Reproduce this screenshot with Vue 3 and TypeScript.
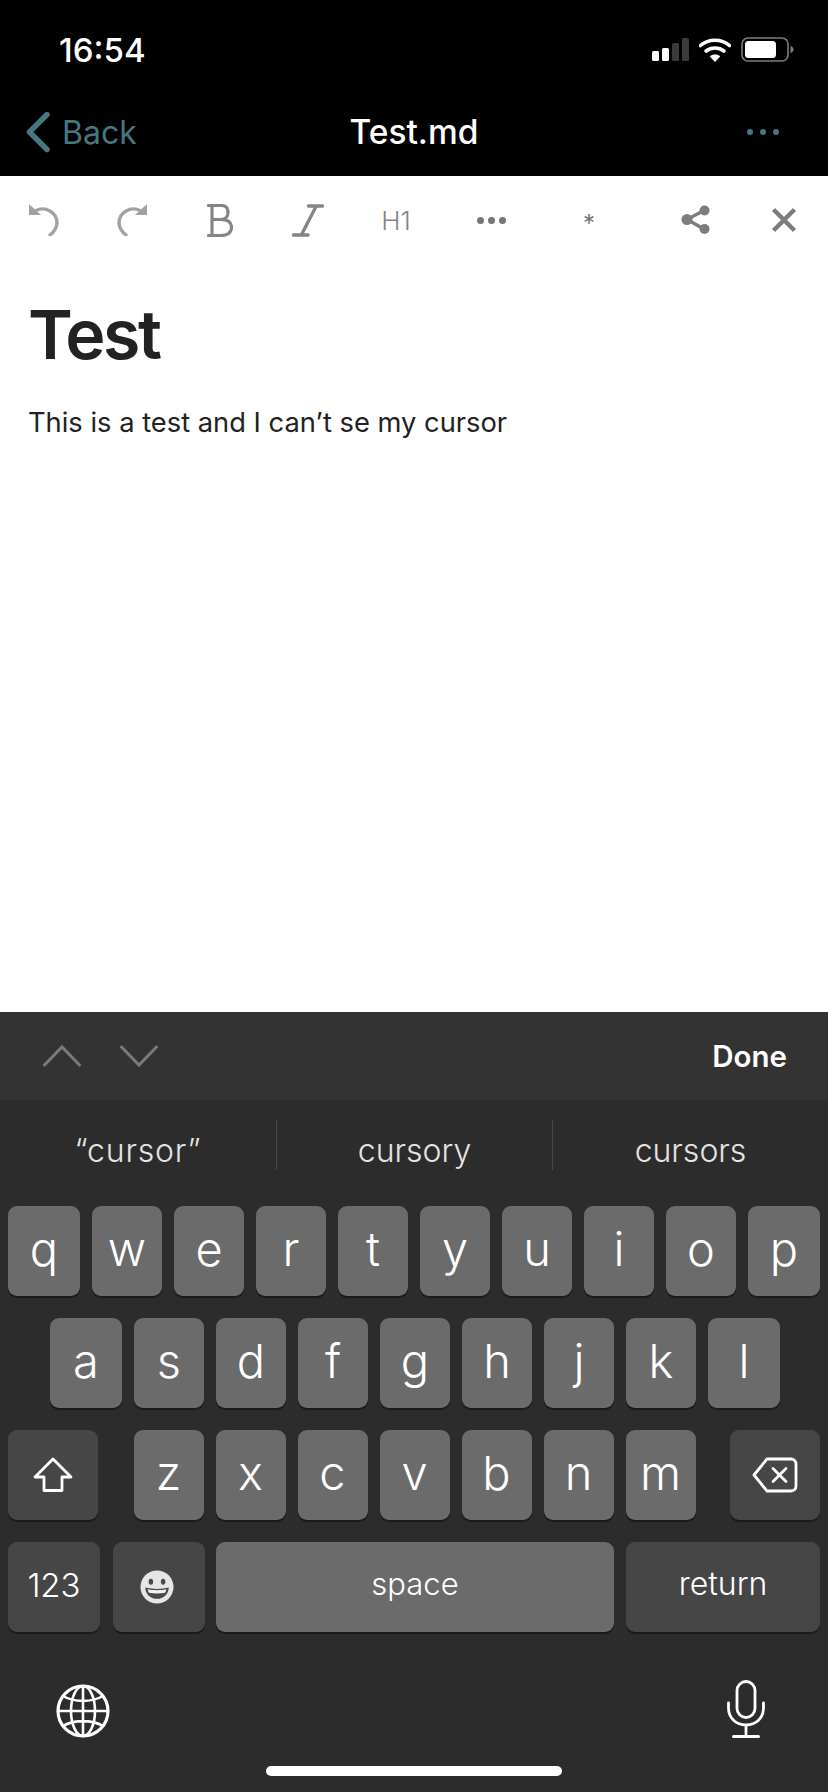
<script setup lang="ts">
type Key = { label: string; wide?: boolean };

const toKeys = (s: string, wideEnds = false): Key[] =>
    s.split('').map((label, i, all) => ({ label, wide: wideEnds && (i === 0 || i === all.length - 1) }));

const row1 = toKeys('qwertyuiop', true);
const row2 = toKeys('asdfghjkl', true);
const row3 = toKeys('zxcvbnm');
</script>

<template>
    <div class="phone">
        <header class="top">
            <div class="status">
                <span class="time">16:54</span>
                <div class="status-icons">
                    <svg class="signal" width="37" height="23" viewBox="0 0 37 23">
                        <rect x="0" y="13" width="7" height="10" rx="1.5" fill="#fff" />
                        <rect x="10" y="10" width="7" height="13" rx="1.5" fill="#fff" />
                        <rect x="20" y="5" width="7" height="18" rx="1.5" fill="#3a3a3a" />
                        <rect x="30" y="0" width="7" height="23" rx="1.5" fill="#3a3a3a" />
                    </svg>
                    <svg class="wifi" width="32" height="24" viewBox="0 0 32 24">
                        <path d="M1.5 7.5C9.5 0.5 22.5 0.5 30.5 7.5" fill="none" stroke="#fff" stroke-width="3.6" stroke-linecap="round" />
                        <path d="M7 13C12 9 20 9 25 13" fill="none" stroke="#fff" stroke-width="3.6" stroke-linecap="round" />
                        <path d="M16 24L10.8 18.4C13.6 16 18.4 16 21.2 18.4Z" fill="#fff" />
                    </svg>
                    <svg class="battery" width="53" height="25" viewBox="0 0 53 25">
                        <rect x="1" y="1" width="46" height="23" rx="6" fill="none" stroke="#7c7c7c" stroke-width="1.6" />
                        <rect x="4" y="4" width="31" height="17" rx="3.5" fill="#fff" />
                        <path d="M49.5 9C51.5 9.6 52.6 11 52.6 12.5C52.6 14 51.5 15.4 49.5 16Z" fill="#7c7c7c" />
                    </svg>
                </div>
            </div>
            <nav class="nav">
                <div class="back">
                    <svg width="26" height="42" viewBox="0 0 26 42">
                        <path d="M22 3.5L4.5 21L22 38.5" fill="none" stroke="#477783" stroke-width="5.4" stroke-linecap="round" stroke-linejoin="round" />
                    </svg>
                    <span>Back</span>
                </div>
                <span class="title">Test.md</span>
                <div class="more">
                    <i></i><i></i><i></i>
                </div>
            </nav>
        </header>

        <div class="toolbar">
            <svg width="30" height="32" viewBox="0 0 30 32">
                <path d="M7 6.500C16 2 28 8 28 19C28 24 24 29 21 31" fill="none" stroke="#a2a2a2" stroke-width="3.400" stroke-linecap="round" />
                <path d="M0 0V11H12Z" fill="#a2a2a2" />
            </svg>
            <svg width="30" height="32" viewBox="0 0 30 32">
                <path d="M23 6.500C14 2 2 8 2 19C2 24 6 29 9 31" fill="none" stroke="#a2a2a2" stroke-width="3.400" stroke-linecap="round" />
                <path d="M30 0V11H18Z" fill="#a2a2a2" />
            </svg>
            <svg width="26" height="33" viewBox="0 0 26 33">
                <path d="M1.500 1.500H14C19 1.500 21 4.500 21 8.500C21 12.500 18.500 15.500 14 15.500H5M14 15.500C20.500 15.500 24.500 18 24.500 23.500C24.500 28.500 20.500 31.500 14 31.500H1.500M5 1.500V31.500" fill="none" stroke="#858585" stroke-width="3.200" stroke-linecap="round" stroke-linejoin="round" />
            </svg>
            <svg width="32" height="33" viewBox="0 0 32 33">
                <path d="M16.500 2H30.500M1.500 31H16M24.300 2L9.300 31" fill="none" stroke="#858585" stroke-width="3.400" stroke-linecap="round" />
            </svg>
            <span class="h1">H1</span>
            <div class="tool-dots"><i></i><i></i><i></i></div>
            <span class="star">*</span>
            <svg width="30" height="30" viewBox="0 0 30 30">
                <path d="M23 5.500L6 14.500L23 24" fill="none" stroke="#7d7d7d" stroke-width="3.400" />
                <circle cx="23.500" cy="5.500" r="5" fill="#7d7d7d" />
                <circle cx="6" cy="14.500" r="5.500" fill="#7d7d7d" />
                <circle cx="23.500" cy="24" r="5" fill="#7d7d7d" />
            </svg>
            <svg width="26" height="26" viewBox="0 0 26 26">
                <path d="M2.500 2.500L23.500 23.500M23.500 2.500L2.500 23.500" fill="none" stroke="#7d7d7d" stroke-width="4.400" />
            </svg>
        </div>

        <main class="doc">
            <h1>Test</h1>
            <p>This is a test and I can’t se my cursor</p>
        </main>

        <div class="accessory">
            <div class="arrows">
                <svg width="38" height="24" viewBox="0 0 38 24">
                    <path d="M1.500 21L19 3L36.500 21" fill="none" stroke="#7a7a7a" stroke-width="3" stroke-linecap="round" />
                </svg>
                <svg width="38" height="24" viewBox="0 0 38 24">
                    <path d="M1.500 3L19 21L36.500 3" fill="none" stroke="#7a7a7a" stroke-width="3" stroke-linecap="round" />
                </svg>
            </div>
            <span class="done">Done</span>
        </div>

        <section class="keyboard">
            <div class="suggest">
                <span class="quoted">“cursor”</span>
                <span>cursory</span>
                <span>cursors</span>
            </div>

            <div class="keys">
                <div class="row">
                    <div v-for="k in row1" :key="k.label" class="key letter" :class="{ wide: k.wide }">{{ k.label }}</div>
                </div>
                <div class="row row-2">
                    <div v-for="k in row2" :key="k.label" class="key letter" :class="{ wide: k.wide }">{{ k.label }}</div>
                </div>
                <div class="row">
                    <div class="key dark shift">
                        <svg width="40" height="36" viewBox="0 0 40 36">
                            <path d="M20 2L38 20H29V33.500H11V20H2Z" fill="none" stroke="#fff" stroke-width="2.800" stroke-linejoin="round" />
                        </svg>
                    </div>
                    <div class="letters">
                        <div v-for="k in row3" :key="k.label" class="key letter">{{ k.label }}</div>
                    </div>
                    <div class="key dark shift">
                        <svg width="46" height="36" viewBox="0 0 46 36">
                            <path d="M15 2H39C42 2 44 4 44 7V29C44 32 42 34 39 34H15L2 18Z" fill="none" stroke="#fff" stroke-width="2.800" stroke-linejoin="round" />
                            <path d="M21 11.500L34 24.500M34 11.500L21 24.500" fill="none" stroke="#fff" stroke-width="2.800" stroke-linecap="round" />
                        </svg>
                    </div>
                </div>
                <div class="row">
                    <div class="key dark num">123</div>
                    <div class="key dark emoji">
                        <svg width="34" height="34" viewBox="0 0 36 36">
                            <circle cx="18" cy="18" r="17.500" fill="#e6e6e6" />
                            <ellipse cx="11.500" cy="12.500" rx="2.400" ry="3.200" fill="#4a4a4a" />
                            <ellipse cx="24.500" cy="12.500" rx="2.400" ry="3.200" fill="#4a4a4a" />
                            <path d="M5.500 18.500C13 20.500 23 20.500 30.500 18.500C30 26 25 30.500 18 30.500C11 30.500 6 26 5.500 18.500Z" fill="#4a4a4a" />
                            <path d="M8 20.500C14 21.800 22 21.800 28 20.500C27.600 22 27.200 23 26.600 24C21 25 15 25 9.400 24C8.800 23 8.400 22 8 20.500Z" fill="#f2f2f2" />
                        </svg>
                    </div>
                    <div class="key letter space">space</div>
                    <div class="key dark ret">return</div>
                </div>
            </div>

            <div class="kb-bottom">
                <svg width="54" height="54" viewBox="0 0 54 54">
                    <g fill="none" stroke="#fff" stroke-width="2.600">
                        <circle cx="27" cy="27" r="25" stroke-width="3.200" />
                        <ellipse cx="27" cy="27" rx="12" ry="25" />
                        <path d="M27 2V52M2 27H52M7 12C18 18.500 36 18.500 47 12M7 42C18 35.500 36 35.500 47 42" />
                    </g>
                </svg>
                <svg width="38" height="58" viewBox="0 0 38 58">
                    <g fill="none" stroke="#fff" stroke-width="2.800" stroke-linecap="round">
                        <rect x="10" y="1.500" width="18" height="36" rx="9" />
                        <path d="M1.500 23V28C1.500 38 9 45 19 45C29 45 36.500 38 36.500 28V23M19 45V56" />
                        <path d="M6.500 56.500H31.500" stroke-width="3" />
                    </g>
                </svg>
            </div>
            <div class="home-bar"></div>
        </section>
    </div>
</template>

<style scoped>
.phone {
    width: 828px;
    height: 1792px;
    display: flex;
    flex-direction: column;
    background: #fff;
    font-family: Inter, "Liberation Sans", sans-serif;
    overflow: hidden;
}
.top {
    background: #000;
    height: 176px;
    color: #fff;
}
.status {
    height: 88px;
    display: flex;
    align-items: center;
    justify-content: space-between;
    padding: 21px 34px 10px 59px;
    box-sizing: border-box;
}
.time {
    font-size: 33px;
    font-weight: 500;
}
.status-icons {
    display: flex;
    align-items: center;
    gap: 10px;
}
.nav {
    height: 88px;
    display: flex;
    align-items: center;
    justify-content: space-between;
    padding: 0 49px 0 25px;
    position: relative;
}
.back {
    display: flex;
    align-items: center;
    gap: 11px;
    color: #477783;
    font-size: 32px;
}
.title {
    position: absolute;
    left: 0;
    right: 0;
    text-align: center;
    font-size: 33.500px;
    font-weight: 500;
}
.more {
    display: flex;
    gap: 7px;
}
.more i {
    width: 6px;
    height: 6px;
    border-radius: 50%;
    background: #477783;
}
.toolbar {
    height: 88px;
    display: grid;
    grid-template-columns: repeat(5, 88px) 102px 94px 120px 56px;
    align-items: center;
    justify-items: center;
}
.h1 {
    font-size: 26px;
    font-weight: 300;
    color: #858585;
}
.tool-dots {
    display: flex;
    gap: 4px;
}
.tool-dots i {
    width: 7px;
    height: 7px;
    border-radius: 50%;
    background: #757575;
}
.star {
    font-size: 24px;
    color: #757575;
    margin-top: 6px;
}
.doc {
    flex: 1;
    padding: 0 28px;
    color: #222;
}
.doc h1 {
    margin: 30px 0 0;
    font-size: 68px;
    font-weight: 600;
    letter-spacing: -2.400px;
    line-height: 80px;
}
.doc p {
    margin: 29px 0 0;
    font-size: 27.300px;
    line-height: 40px;
}
.accessory {
    height: 88px;
    background: #333;
    display: flex;
    align-items: center;
    justify-content: space-between;
    padding: 0 41px 0 43px;
}
.arrows {
    display: flex;
    gap: 39px;
}
.done {
    color: #fff;
    font-size: 29.500px;
    font-weight: 600;
}
.keyboard {
    height: 692px;
    background: #2c2c2c;
    position: relative;
}
.suggest {
    height: 106px;
    box-sizing: border-box;
    padding-top: 20px;
    display: grid;
    grid-template-columns: repeat(3, 1fr);
    align-items: start;
}
.suggest span {
    height: 50px;
    line-height: 62px;
    text-align: center;
    color: #e4e4e4;
    font-size: 32px;
    font-weight: 300;
    border-left: 1px solid #494949;
}
.suggest .quoted {
    border-left: none;
    letter-spacing: 0.800px;
}
.keys {
    display: flex;
    flex-direction: column;
    gap: 22px;
    padding: 0 8px;
}
.row {
    display: flex;
    justify-content: space-between;
}
.row-2 {
    padding: 0 40px 0 42px;
}
.letters {
    display: flex;
    gap: 12px;
    margin-left: 1px;
}
.key {
    height: 90px;
    width: 70px;
    border-radius: 9px;
    display: flex;
    align-items: center;
    justify-content: center;
    color: #fff;
    box-shadow: 0 2px 0 #1a1a1a;
    box-sizing: border-box;
}
.letter {
    background: #6b6b6b;
    font-size: 47px;
    font-weight: 300;
    padding-bottom: 6px;
}
.wide {
    width: 72px;
}
.dark {
    background: #464646;
}
.shift {
    width: 90px;
}
.num {
    width: 92px;
    font-size: 33px;
    font-weight: 300;
    padding-bottom: 4px;
}
.emoji {
    width: 92px;
    margin-left: 13px;
    margin-right: 11px;
    padding-right: 4px;
}
.space {
    flex: 1;
    font-size: 31px;
    padding-bottom: 8px;
}
.ret {
    width: 194px;
    margin-left: 12px;
    font-size: 32px;
    font-weight: 300;
    padding-bottom: 8px;
}
.kb-bottom {
    display: flex;
    justify-content: space-between;
    align-items: flex-end;
    padding: 48px 63px 0 56px;
}
.home-bar {
    position: absolute;
    left: 266px;
    bottom: 16px;
    width: 296px;
    height: 10px;
    border-radius: 5px;
    background: #fff;
}
</style>

<style>
body {
    background: #fff;
}
</style>
